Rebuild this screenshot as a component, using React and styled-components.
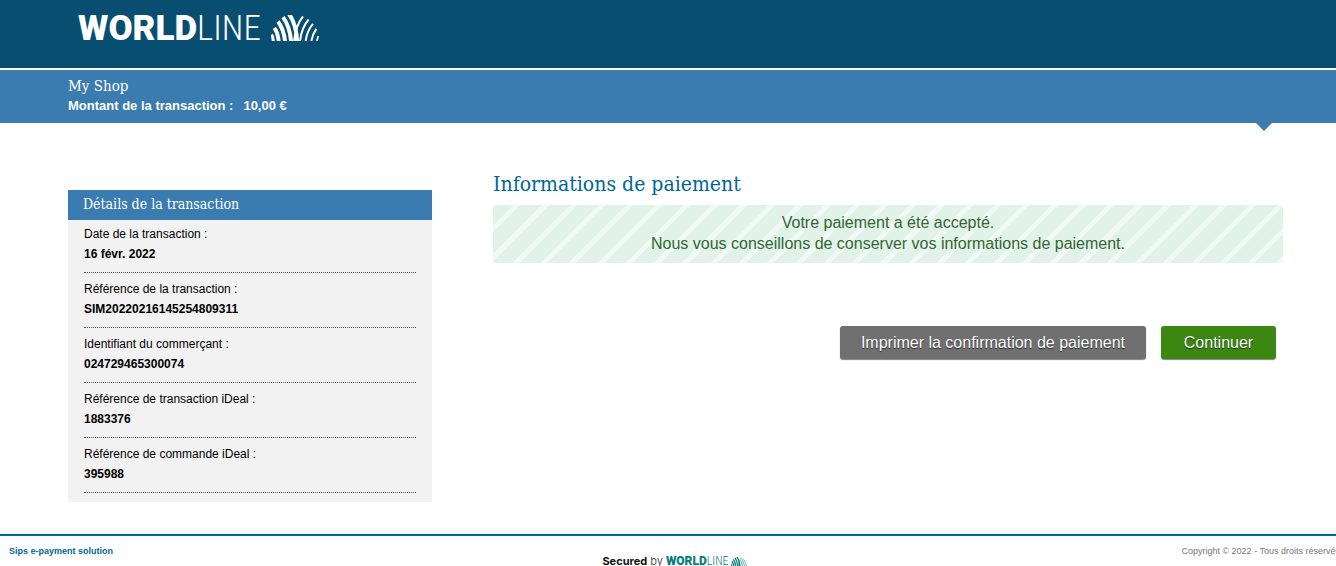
import React from "react";
import styled, { createGlobalStyle } from "styled-components";

const details = [
  { label: "Date de la transaction :", value: "16 févr. 2022" },
  { label: "Référence de la transaction :", value: "SIM20220216145254809311" },
  { label: "Identifiant du commerçant :", value: "024729465300074" },
  { label: "Référence de transaction iDeal :", value: "1883376" },
  { label: "Référence de commande iDeal :", value: "395988" }
];

const Worldline = ({ small }) => (
  <Brand small={small}>
    <BrandName>
      <b>WORLD</b>
      <span>LINE</span>
    </BrandName>
    <BrandMark small={small} viewBox="32 28 144 77" aria-hidden="true">
      <g fill="none" stroke="currentColor">
        <path strokeWidth="9" d="M34 86Q38 94 39 106" />
        <path strokeWidth="12" d="M42 66Q53 82 55 106" />
        <path strokeWidth="12" d="M53 47Q70 69 74 106" />
        <path strokeWidth="12" d="M68 34Q89 63 92 106" />
        <path strokeWidth="12" d="M86 24Q109 59 110 106" />
        <path strokeWidth="6" d="M128 32Q107 56 101 106" />
        <path strokeWidth="6" d="M145 41Q124 64 119 106" />
        <path strokeWidth="6" d="M158 54Q140 74 136 106" />
        <path strokeWidth="6" d="M168 69Q157 84 153 106" />
        <path strokeWidth="5" d="M174 91Q171 97 170 106" />
      </g>
    </BrandMark>
  </Brand>
);

export default function App() {
  return (
    <Page>
      <GlobalStyle />
      <Header>
        <Worldline />
      </Header>
      <ShopBar>
        <ShopName>My Shop</ShopName>
        <Amount>
          <span>Montant de la transaction :</span>
          <span>10,00 €</span>
        </Amount>
      </ShopBar>
      <Content>
        <Sidebar>
          <SidebarTitle>Détails de la transaction</SidebarTitle>
          <Details>
            {details.map(({ label, value }) => (
              <Detail key={label}>
                <dt>{label}</dt>
                <dd>{value}</dd>
              </Detail>
            ))}
          </Details>
        </Sidebar>
        <Main>
          <Title>Informations de paiement</Title>
          <Message role="status">
            <p>Votre paiement a été accepté.</p>
            <p>Nous vous conseillons de conserver vos informations de paiement.</p>
          </Message>
          <Actions>
            <Button type="button" onClick={() => window.print()}>
              Imprimer la confirmation de paiement
            </Button>
            <Button type="button" primary>
              Continuer
            </Button>
          </Actions>
        </Main>
      </Content>
      <Footer>
        <Solution href="#">Sips e-payment solution</Solution>
        <Secured>
          <b>Secured</b>
          <span>by</span>
          <Worldline small />
        </Secured>
        <Copyright>Copyright © 2022 - Tous droits réservés</Copyright>
      </Footer>
    </Page>
  );
}

const GlobalStyle = createGlobalStyle`
  * {
    box-sizing: border-box;
  }

  body {
    margin: 0;
    background: #fff;
    color: #000;
    font-family: "Liberation Sans", Arial, sans-serif;
    font-size: 12px;
  }

  h1, h2, p, dl, dd {
    margin: 0;
    font-weight: normal;
  }
`;

const serif = `"DejaVu Serif Condensed", "DejaVu Serif", serif`;

const Page = styled.div`
  overflow: hidden;
`;

const Header = styled.header`
  padding: 11px 78px 21px;
  background: #084e71;
  color: #fff;
`;

const Brand = styled.div.withConfig({
  shouldForwardProp: prop => prop !== "small"
})`
  display: flex;
  align-items: flex-start;
  gap: ${props => (props.small ? "2px" : "10px")};
  font-family: Roboto, sans-serif;
  font-size: ${props => (props.small ? "12px" : "35px")};
  line-height: ${props => (props.small ? "14px" : "36px")};
`;

const BrandName = styled.div`
  display: flex;

  b {
    font-weight: 900;
  }

  span {
    font-family: "Roboto Condensed", Roboto, sans-serif;
    font-weight: 300;
  }
`;

const BrandMark = styled.svg.withConfig({
  shouldForwardProp: prop => prop !== "small"
})`
  width: ${props => (props.small ? "16px" : "48px")};
  height: ${props => (props.small ? "9px" : "26px")};
  margin-top: ${props => (props.small ? "3px" : "4px")};
`;

const ShopBar = styled.div`
  position: relative;
  margin-top: 2px;
  padding: 6px 68px 7px;
  background: #3a7caf;
  color: #fff;

  &::after {
    content: "";
    position: absolute;
    top: 100%;
    right: 64px;
    border: 8px solid transparent;
    border-top-color: #3a7caf;
    border-bottom: 0;
  }
`;

const ShopName = styled.p`
  font-family: ${serif};
  font-size: 15px;
  line-height: 20px;
`;

const Amount = styled.p`
  display: flex;
  gap: 10px;
  font-size: 13px;
  font-weight: bold;
  line-height: 20px;
`;

const Content = styled.div`
  display: flex;
  align-items: flex-start;
  gap: 61px;
  padding: 47px 53px 32px 68px;
`;

const Sidebar = styled.aside`
  flex: 0 0 364px;
  margin-top: 20px;
  background: #f2f2f2;
`;

const SidebarTitle = styled.h2`
  padding: 0 15px 2px;
  background: #3a7caf;
  color: #fff;
  font-family: ${serif};
  font-size: 14px;
  line-height: 28px;
`;

const Details = styled.dl`
  padding: 4px 16px 3px;
`;

const Detail = styled.div`
  margin-bottom: 6px;
  padding-bottom: 8px;
  border-bottom: 1px dotted #555;
  line-height: 20px;

  dd {
    font-weight: bold;
  }
`;

const Main = styled.main`
  flex: 1;
`;

const Title = styled.h1`
  color: #006699;
  font-family: ${serif};
  font-size: 21px;
  line-height: 28px;
`;

const Message = styled.div`
  margin-top: 7px;
  padding: 7px 16px 9px;
  background: repeating-linear-gradient(
    -45deg,
    #f0f9f3 0 5px,
    #e1f3e8 5px 20px
  );
  border-radius: 3px;
  color: #336633;
  font-size: 16px;
  line-height: 21px;
  text-align: center;
`;

const Actions = styled.div`
  display: flex;
  justify-content: flex-end;
  gap: 15px;
  margin-top: 63px;
  padding-right: 7px;
`;

const Button = styled.button.withConfig({
  shouldForwardProp: prop => prop !== "primary"
})`
  min-width: 115px;
  padding: 0 21px;
  border: 0;
  border-radius: 3px;
  background: ${props => (props.primary ? "#3c8712" : "#707070")};
  box-shadow: 0 1px 1px rgba(0, 0, 0, 0.5);
  color: #fff;
  font-family: inherit;
  font-size: 16px;
  line-height: 33px;
  text-shadow: 0 1px 1px rgba(0, 0, 0, 0.7);
  cursor: pointer;
`;

const Footer = styled.footer`
  display: grid;
  grid-template-columns: 1fr auto 1fr;
  align-items: start;
  margin-right: -4px;
  padding: 10px 0 8px 9px;
  border-top: 2px solid #006699;
  font-size: 9px;
  line-height: 10px;
`;

const Solution = styled.a`
  color: #006699;
  font-weight: bold;
  text-decoration: none;
`;

const Secured = styled.div`
  display: flex;
  align-items: center;
  gap: 3px;
  margin-top: 8px;
  color: #111;
  font-family: Inter, sans-serif;
  font-size: 11px;
  line-height: 14px;

  > span {
    color: #555;
  }

  ${Brand} {
    color: #087c7c;
  }
`;

const Copyright = styled.p`
  color: #777;
  text-align: right;
  white-space: nowrap;
`;
